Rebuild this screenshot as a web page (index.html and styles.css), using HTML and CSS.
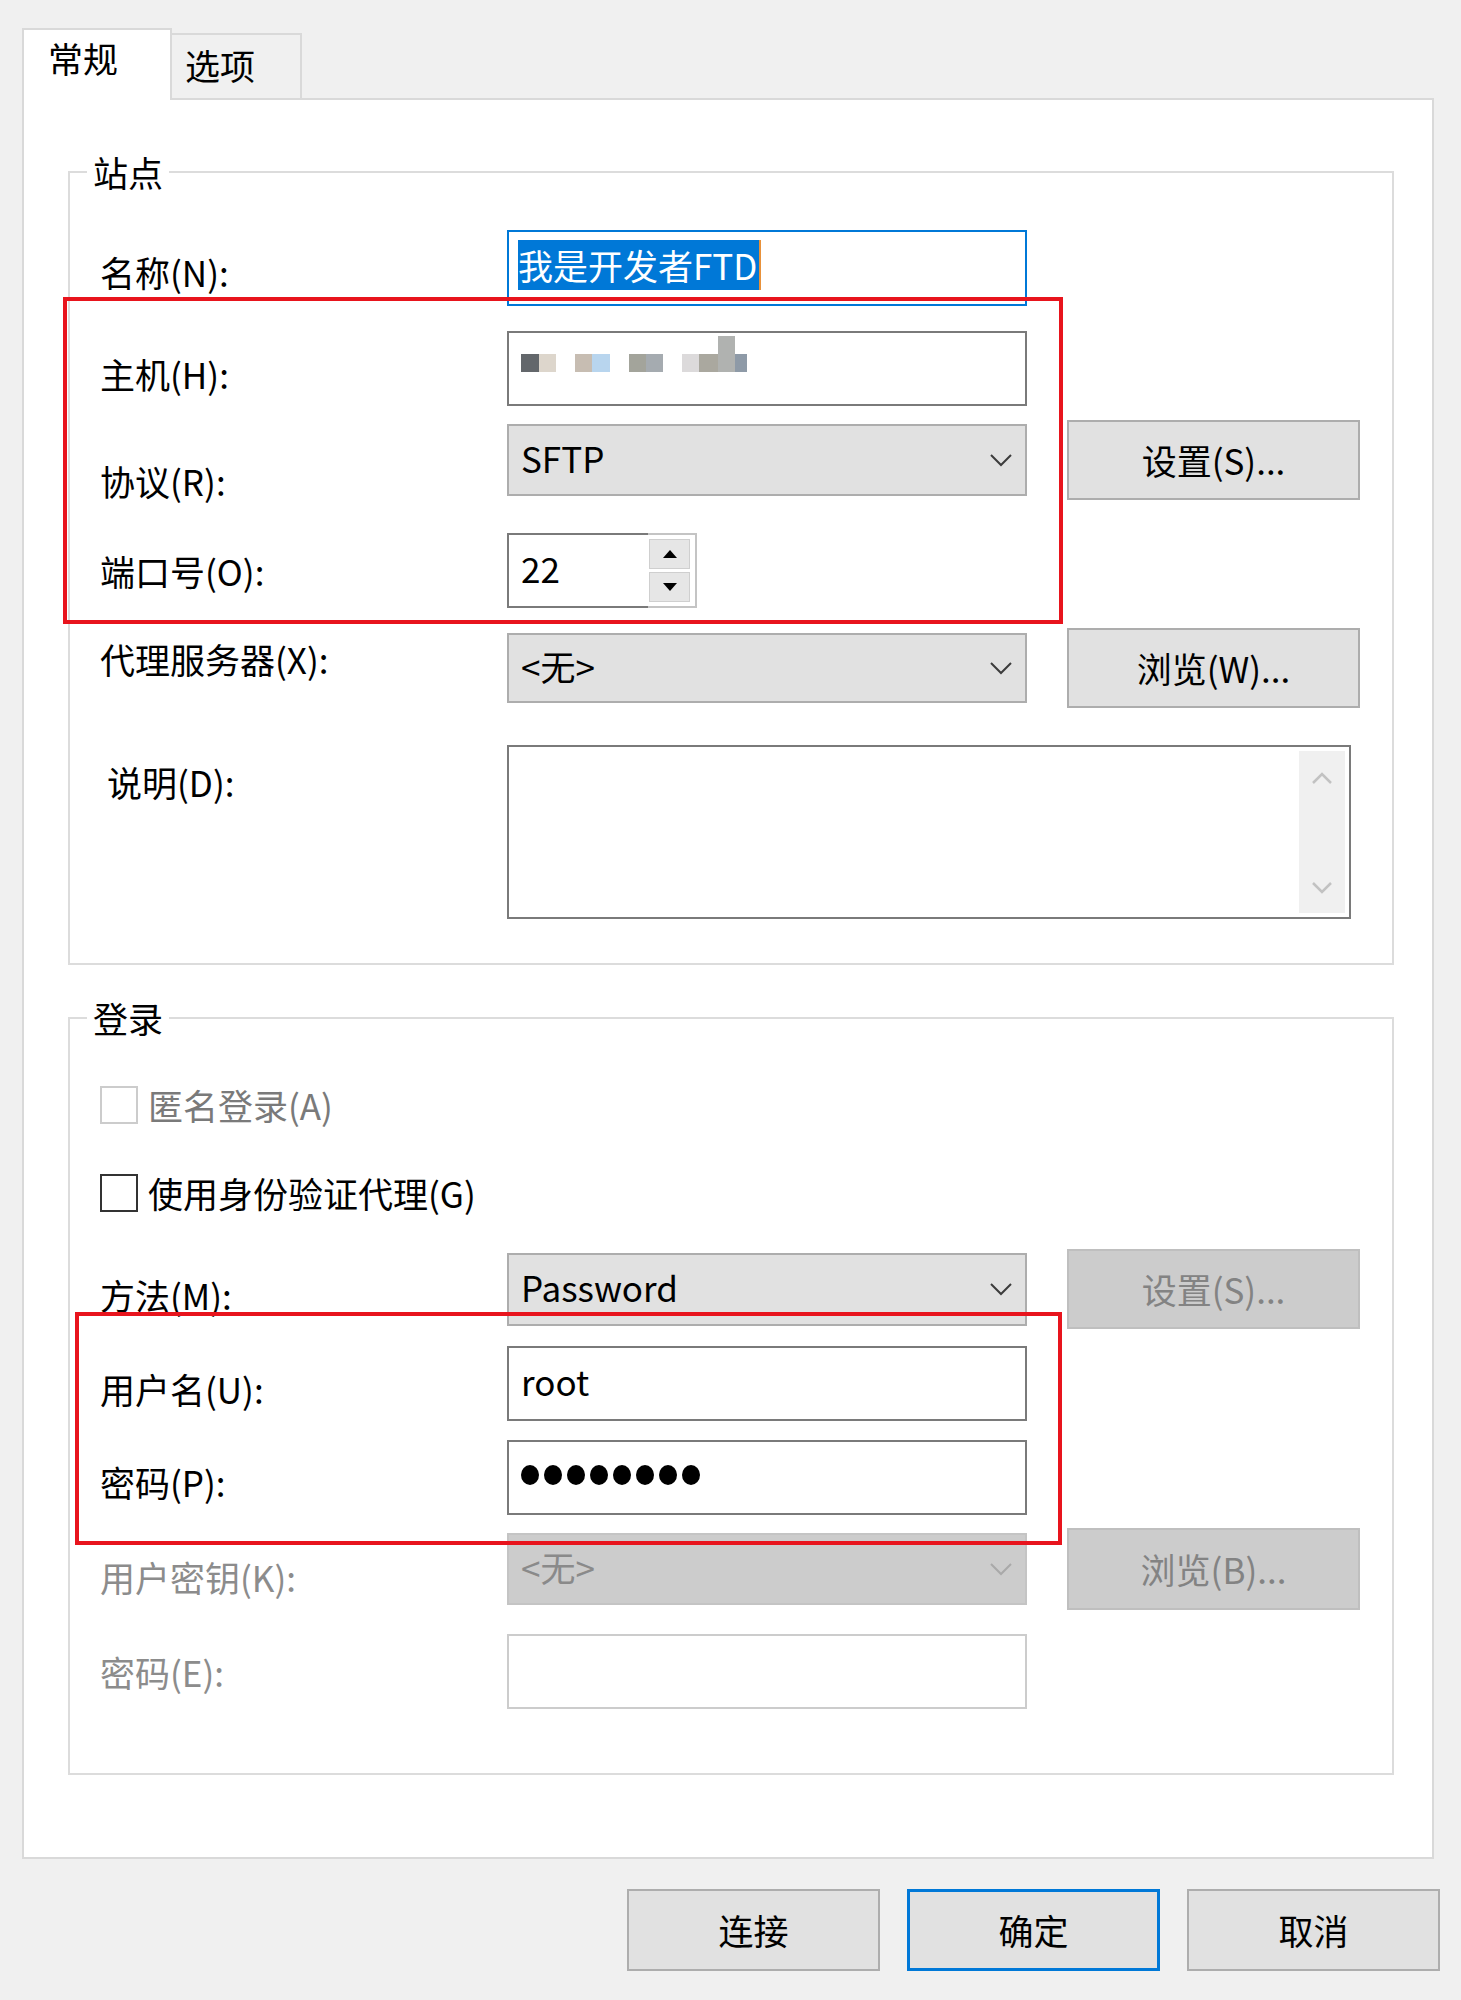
FILE: index.html
```html
<!DOCTYPE html>
<html>

<head>
    <meta charset="utf-8">
    <title>站点管理器</title>
    <link rel="stylesheet" href="styles.css">
</head>

<body>
    <div class="dialog">
        <div class="tabs">
            <div class="tab active">常规</div>
            <div class="tab">选项</div>
        </div>

        <div class="panel">
            <fieldset class="group site">
                <legend>站点</legend>

                <div class="row r-name">
                    <label class="lbl">名称(N):</label>
                    <div class="field focus"><span class="sel">我是开发者FTD</span></div>
                </div>

                <div class="row r-host">
                    <label class="lbl">主机(H):</label>
                    <div class="field">
                        <div class="blur">
                            <span class="px" style="width:18px;background:#63676b"></span>
                            <span class="px" style="width:17px;background:#ddd6cc"></span>
                            <span class="px gap" style="width:17px;background:#c7bdb2"></span>
                            <span class="px" style="width:18px;background:#b8d5ee"></span>
                            <span class="px gap" style="width:17px;background:#a3a49b"></span>
                            <span class="px" style="width:17px;background:#a5abb0"></span>
                            <span class="px gap" style="width:17px;background:#dcdadb"></span>
                            <span class="px" style="width:19px;background:#aaa89f"></span>
                            <span class="px tall" style="width:17px;background:#b0b2b0"></span>
                            <span class="px" style="width:12px;background:#8e9aa7"></span>
                        </div>
                    </div>
                </div>

                <div class="row r-proto">
                    <label class="lbl">协议(R):</label>
                    <div class="select">
                        <span>SFTP</span>
                        <svg class="chev" width="24" height="14" viewBox="0 0 24 14"><polyline points="2,2 12,12 22,2" fill="none" stroke="#3c3c3c" stroke-width="2"/></svg>
                    </div>
                    <button class="btn">设置(S)...</button>
                </div>

                <div class="row r-port">
                    <label class="lbl">端口号(O):</label>
                    <div class="spin">
                        <div class="spin-text">22</div>
                        <div class="spin-btns">
                            <div class="spin-btn"><svg width="14" height="8" viewBox="0 0 14 8"><polygon points="7,0 14,8 0,8" fill="#000"/></svg></div>
                            <div class="spin-btn"><svg width="14" height="8" viewBox="0 0 14 8"><polygon points="0,0 14,0 7,8" fill="#000"/></svg></div>
                        </div>
                    </div>
                </div>

                <div class="row r-proxy">
                    <label class="lbl">代理服务器(X):</label>
                    <div class="select">
                        <span>&lt;无&gt;</span>
                        <svg class="chev" width="24" height="14" viewBox="0 0 24 14"><polyline points="2,2 12,12 22,2" fill="none" stroke="#3c3c3c" stroke-width="2"/></svg>
                    </div>
                    <button class="btn">浏览(W)...</button>
                </div>

                <div class="row r-desc">
                    <label class="lbl">说明(D):</label>
                    <div class="memo">
                        <div class="scroll">
                            <svg width="22" height="12" viewBox="0 0 22 12"><polyline points="2,11 11,2 20,11" fill="none" stroke="#c2c2c2" stroke-width="2.5"/></svg>
                            <svg width="22" height="12" viewBox="0 0 22 12"><polyline points="2,1 11,10 20,1" fill="none" stroke="#c2c2c2" stroke-width="2.5"/></svg>
                        </div>
                    </div>
                </div>
            </fieldset>

            <fieldset class="group login">
                <legend>登录</legend>

                <div class="check r-anon off">
                    <span class="box"></span>
                    <span>匿名登录(A)</span>
                </div>

                <div class="check r-agent">
                    <span class="box"></span>
                    <span>使用身份验证代理(G)</span>
                </div>

                <div class="row r-method">
                    <label class="lbl">方法(M):</label>
                    <div class="select">
                        <span>Password</span>
                        <svg class="chev" width="24" height="14" viewBox="0 0 24 14"><polyline points="2,2 12,12 22,2" fill="none" stroke="#3c3c3c" stroke-width="2"/></svg>
                    </div>
                    <button class="btn off">设置(S)...</button>
                </div>

                <div class="row r-user">
                    <label class="lbl">用户名(U):</label>
                    <div class="field">root</div>
                </div>

                <div class="row r-pass">
                    <label class="lbl">密码(P):</label>
                    <div class="field">
                        <span class="dot"></span><span class="dot"></span><span class="dot"></span><span class="dot"></span><span class="dot"></span><span class="dot"></span><span class="dot"></span><span class="dot"></span>
                    </div>
                </div>

                <div class="row r-key off">
                    <label class="lbl">用户密钥(K):</label>
                    <div class="select">
                        <span>&lt;无&gt;</span>
                        <svg class="chev" width="24" height="14" viewBox="0 0 24 14"><polyline points="2,2 12,12 22,2" fill="none" stroke="#a9a9a9" stroke-width="2"/></svg>
                    </div>
                    <button class="btn off">浏览(B)...</button>
                </div>

                <div class="row r-phrase off">
                    <label class="lbl">密码(E):</label>
                    <div class="field"></div>
                </div>
            </fieldset>

            <!-- red annotation boxes drawn over the screenshot -->
            <div class="mark mark-host"></div>
            <div class="mark mark-user"></div>
        </div>

        <div class="footer">
            <button class="btn foot">连接</button>
            <button class="btn foot primary">确定</button>
            <button class="btn foot">取消</button>
        </div>
    </div>
</body>

</html>
```

FILE: styles.css
```css
* {
    box-sizing: border-box;
}

body {
    margin: 0;
    background: #f0f0f0;
    font-family: "Noto Sans CJK SC", "Noto Sans", sans-serif;
    font-size: 35px;
    line-height: 40px;
    color: #000;
}

.dialog {
    padding: 28px 0 0 22px;
}

/* tabs */
.tabs {
    display: flex;
    align-items: flex-end;
    height: 70px;
}

.tab {
    width: 130px;
    height: 65px;
    padding: 10px 0 0 13px;
    background: #f0f0f0;
    border: 2px solid #d9d9d9;
    border-left: none;
    border-bottom: none;
}

.tab.active {
    width: 150px;
    height: 72px;
    margin-bottom: -2px;
    padding: 8px 0 0 24px;
    background: #fff;
    border-left: 2px solid #d9d9d9;
    position: relative;
    z-index: 1;
}

/* main panel */
.panel {
    position: relative;
    width: 1412px;
    background: #fff;
    border: 2px solid #d9d9d9;
    padding: 52px 38px 82px 44px;
}

.group {
    margin: 0;
    min-width: 0;
    border: 2px solid #dcdcdc;
    padding: 38px 32px 44px 30px;
}

.group legend {
    padding: 0 6px;
    margin-left: -13px;
    line-height: 40px;
}

.login {
    margin-top: 33px;
    padding-top: 48px;
    padding-bottom: 64px;
}

.row {
    display: grid;
    grid-template-columns: 367px 520px 293px;
    column-gap: 40px;
    align-items: center;
}

.lbl {
    white-space: nowrap;
}

/* rows of the site group */
.r-name .field { height: 76px; }
.r-name .lbl { padding-top: 8px; }

.r-host { margin-top: 25px; }
.r-host .field { height: 75px; }
.r-host .lbl { padding-top: 11px; }

.r-proto { margin-top: 13px; }
.r-proto .select { height: 72px; }
.r-proto .btn { height: 80px; }
.r-proto .lbl { padding-top: 42px; }

.r-port { margin-top: 32px; }

.r-proxy { margin-top: 20px; }
.r-proxy .select { height: 70px; }
.r-proxy .btn { height: 80px; }
.r-proxy .lbl { padding-bottom: 18px; }

.r-desc {
    margin-top: 37px;
    align-items: start;
}
.r-desc .lbl { padding: 17px 0 0 7px; }

/* rows of the login group */
.check {
    display: flex;
    align-items: center;
    gap: 10px;
    height: 38px;
}

.check .box {
    width: 38px;
    height: 38px;
    border: 2px solid #333;
    background: #fff;
}

.check.off {
    color: #7a7a7a;
}

.check.off .box {
    border-color: #cccccc;
}

.r-agent { margin-top: 50px; }

.r-method { margin-top: 37px; }
.r-method .select { height: 73px; }
.r-method .btn { height: 80px; }
.r-method .lbl { padding-top: 12px; }

.r-user { margin-top: 17px; }
.r-user .field { height: 75px; }
.r-user .lbl { padding-top: 11px; }

.r-pass { margin-top: 19px; }
.r-pass .field { height: 75px; }
.r-pass .lbl { padding-top: 9px; }

.r-key { margin-top: 13px; }
.r-key .select { height: 72px; }
.r-key .btn { height: 82px; }
.r-key .lbl { padding-top: 16px; }

.r-phrase { margin-top: 24px; }
.r-phrase .field { height: 75px; }

.row.off .lbl {
    color: #8c8c8c;
}

/* controls */
.field {
    display: flex;
    align-items: center;
    padding: 0 12px 6px 12px;
    height: 75px;
    background: #fff;
    border: 2px solid #7a7a7a;
}

.field.focus {
    border-color: #0078d7;
    padding-left: 9px;
}

.sel {
    background: #0078d7;
    color: #fff;
    line-height: 50px;
    padding-right: 2px;
    border-right: 2px solid #e8913a;
}

.off .field {
    border-color: #cccccc;
}

.blur {
    display: flex;
    align-items: flex-end;
    margin-bottom: 24px;
}

.px {
    display: inline-block;
    height: 18px;
}

.px.gap {
    margin-left: 19px;
}

.px.tall {
    height: 36px;
}

.dot {
    display: inline-block;
    width: 18px;
    height: 20px;
    border-radius: 50%;
    background: #000;
    margin-right: 5px;
}

.select {
    display: flex;
    align-items: center;
    justify-content: space-between;
    padding: 0 12px 4px 12px;
    background: #e1e1e1;
    border: 2px solid #adadad;
}

.select .chev {
    margin-top: 4px;
}

.off .select {
    background: #cccccc;
    border-color: #c4c4c4;
    color: #8a8a8a;
}

.btn {
    font-family: inherit;
    font-size: 35px;
    line-height: 40px;
    color: #000;
    background: #e1e1e1;
    border: 2px solid #adadad;
    padding: 0;
}

.btn.off {
    background: #cccccc;
    border-color: #bfbfbf;
    color: #838383;
}

.spin {
    display: flex;
    width: 190px;
    height: 75px;
}

.spin-text {
    width: 141px;
    display: flex;
    align-items: center;
    padding: 0 0 6px 12px;
    border: 2px solid #7a7a7a;
    border-right: none;
}

.spin-btns {
    flex: 1;
    display: flex;
    flex-direction: column;
    gap: 3px;
    padding: 4px 5px 4px 1px;
    border: 2px solid #c4c4c4;
    border-left: none;
}

.spin-btn {
    flex: 1;
    display: flex;
    align-items: center;
    justify-content: center;
    background: #e6e6e6;
    border: 1px solid #cfcfcf;
}

.memo {
    grid-column: 2 / 4;
    width: 844px;
    height: 174px;
    display: flex;
    justify-content: flex-end;
    padding: 4px;
    border: 2px solid #7a7a7a;
    background: #fff;
}

.scroll {
    width: 46px;
    display: flex;
    flex-direction: column;
    justify-content: space-between;
    align-items: center;
    padding: 21px 0 19px;
    background: #f0f0f0;
}

/* annotation */
.mark {
    position: absolute;
    border: 4px solid #e8141d;
}

.mark-host {
    left: 39px;
    top: 197px;
    width: 1000px;
    height: 327px;
}

.mark-user {
    left: 51px;
    top: 1212px;
    width: 987px;
    height: 233px;
}

/* bottom buttons */
.footer {
    display: flex;
    justify-content: flex-end;
    gap: 27px;
    margin-top: 30px;
    padding-right: 21px;
}

.btn.foot {
    width: 253px;
    height: 82px;
}

.btn.primary {
    border: 3px solid #0078d7;
}
```
